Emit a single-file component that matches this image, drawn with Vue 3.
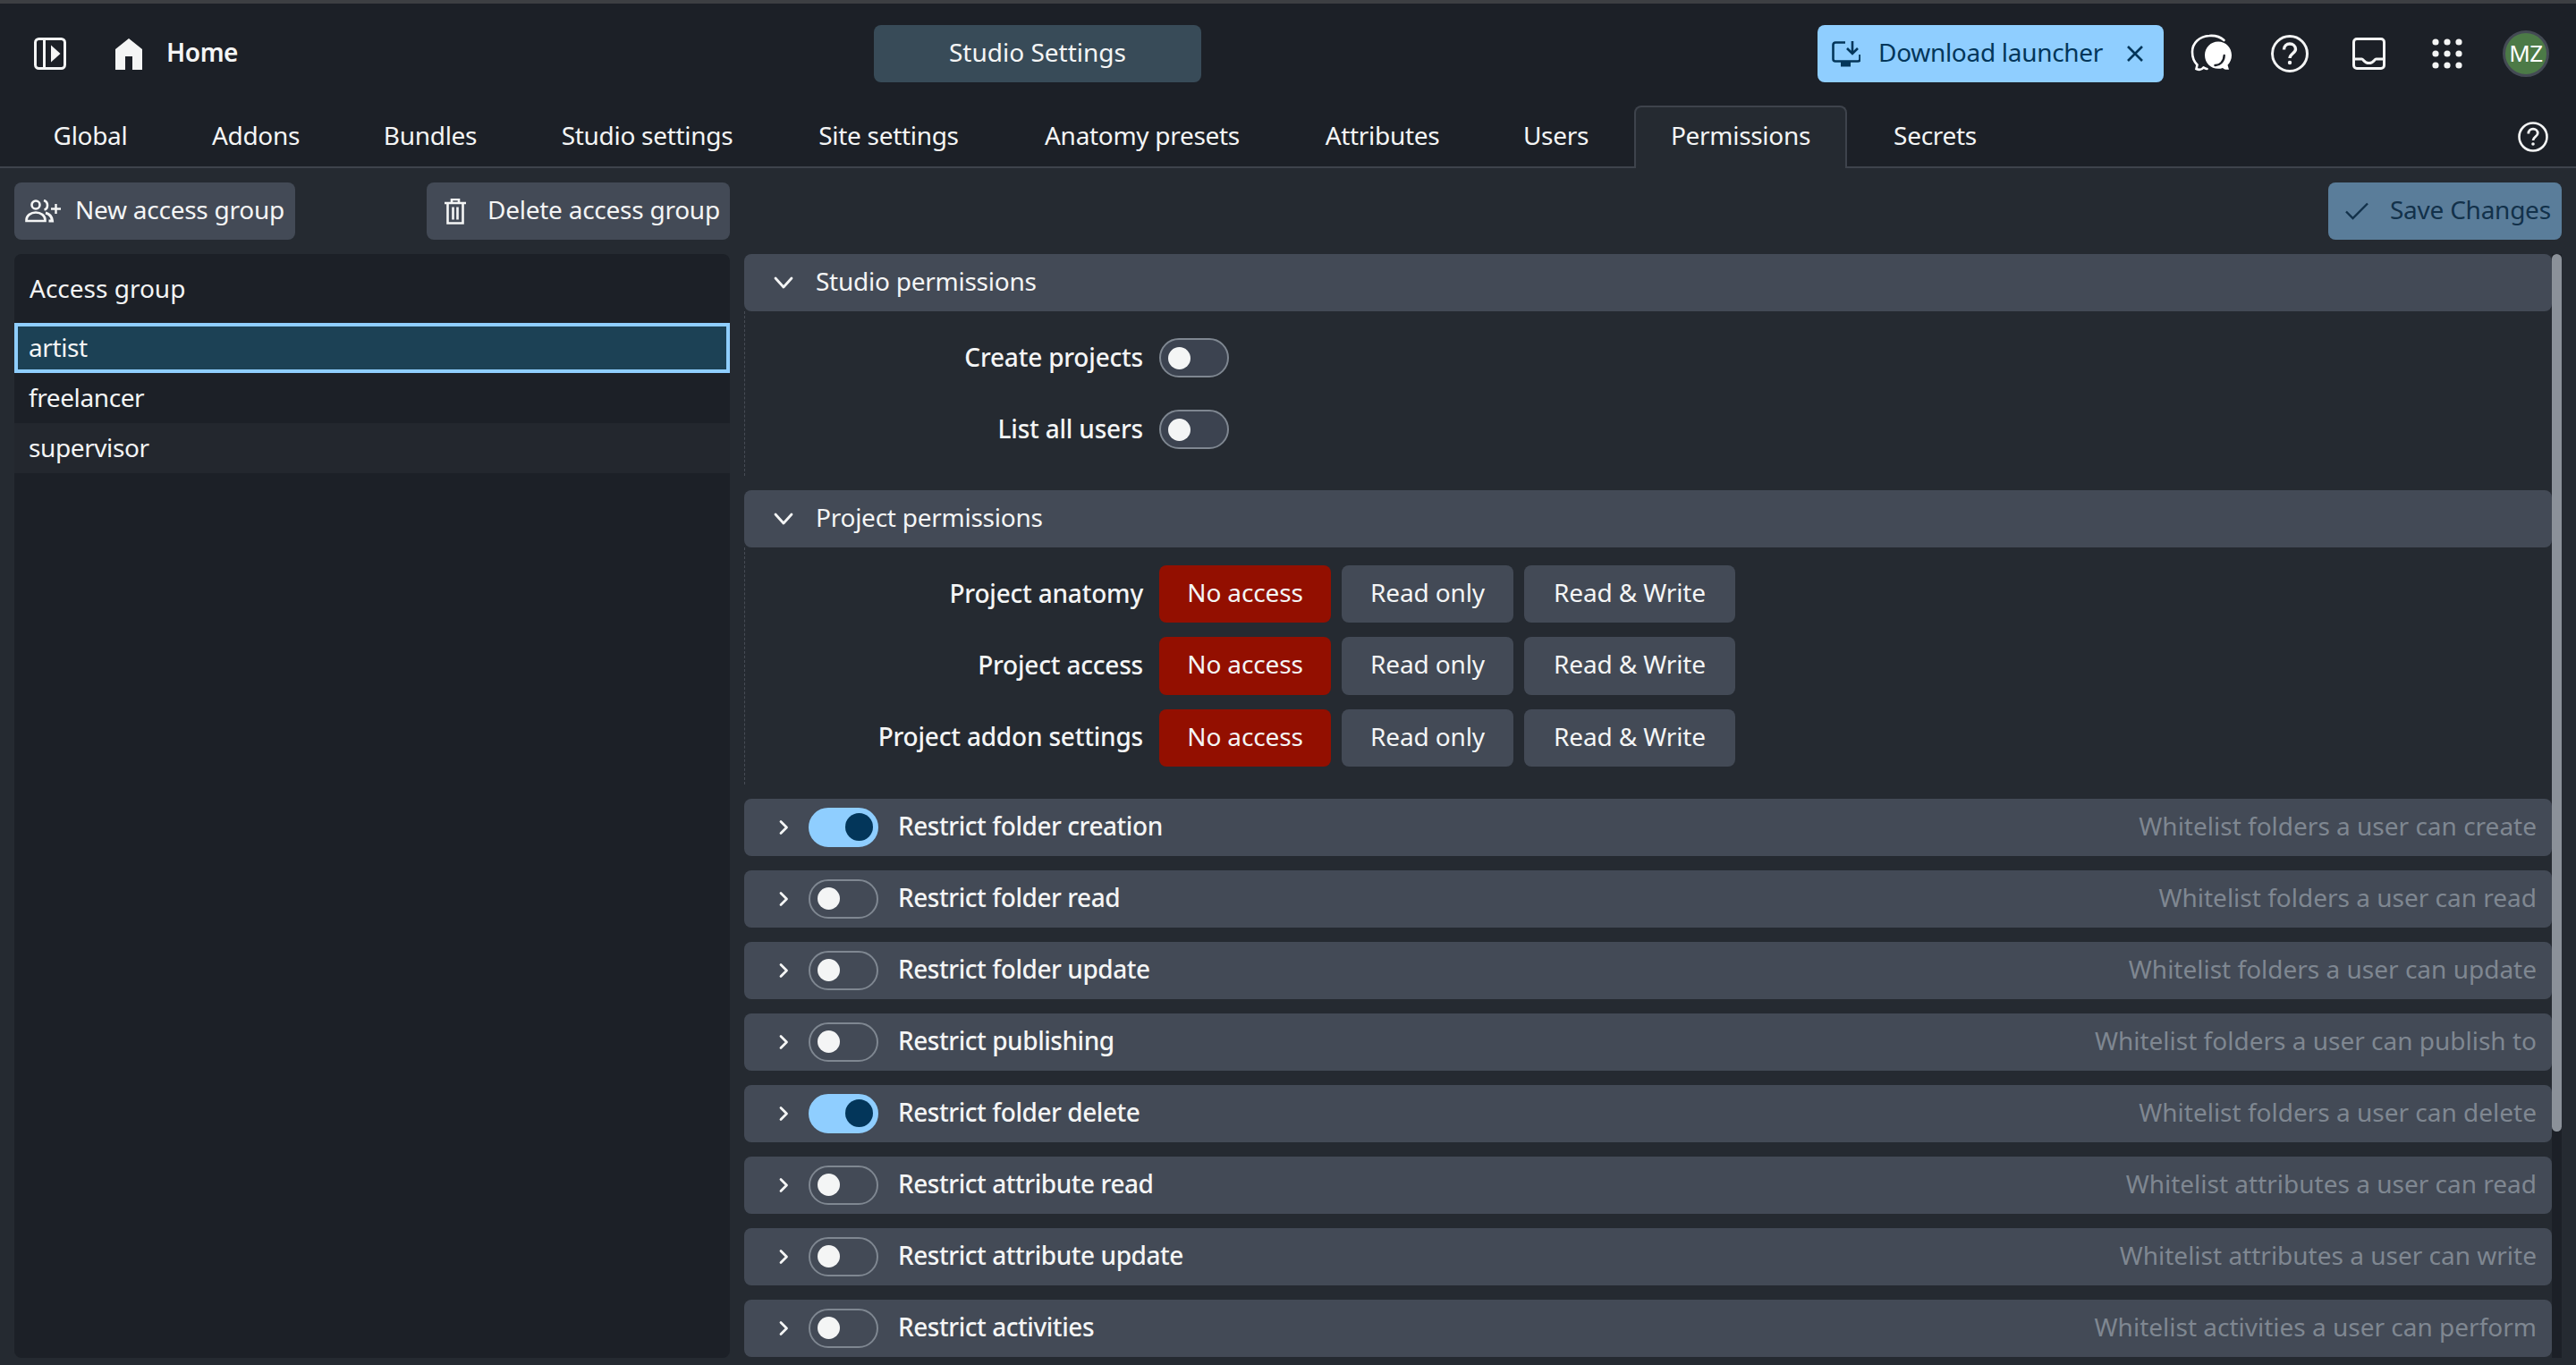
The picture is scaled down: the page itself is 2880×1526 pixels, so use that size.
<script setup>
const tabs = [
  { t: 'Global', w: 168 }, { t: 'Addons', w: 182 }, { t: 'Bundles', w: 188 },
  { t: 'Studio settings', w: 277 }, { t: 'Site settings', w: 243 }, { t: 'Anatomy presets', w: 304 },
  { t: 'Attributes', w: 213 }, { t: 'Users', w: 155 }, { t: 'Permissions', w: 238 }, { t: 'Secrets', w: 177 },
]
const groups = [{n:'artist',c:'sel'},{n:'freelancer',c:''},{n:'supervisor',c:'alt'}]
const studioPerms = ['Create projects','List all users']
const projectPerms = ['Project anatomy','Project access','Project addon settings']
const restrictions = [
  ['Restrict folder creation','Whitelist folders a user can create',true],
  ['Restrict folder read','Whitelist folders a user can read',false],
  ['Restrict folder update','Whitelist folders a user can update',false],
  ['Restrict publishing','Whitelist folders a user can publish to',false],
  ['Restrict folder delete','Whitelist folders a user can delete',true],
  ['Restrict attribute read','Whitelist attributes a user can read',false],
  ['Restrict attribute update','Whitelist attributes a user can write',false],
  ['Restrict activities','Whitelist activities a user can perform',false],
]
</script>

<template>
  <div class="app">
    <header class="top">
      <div class="left">
        <svg class="ic-side" width="36" height="36" viewBox="0 0 36 36"><rect x="1.5" y="1.5" width="33" height="33" rx="4" fill="none" stroke="#f4f5f5" stroke-width="3"/><path d="M11.5 2v32" stroke="#f4f5f5" stroke-width="3"/><path d="M19 8.500 29.500 18 19 27.500z" fill="#f4f5f5"/></svg>
        <svg class="ic-home" width="30" height="35" viewBox="0 0 30 35"><path d="M15 0 30 12v23H19V20h-8v15H0V12z" fill="#f4f5f5"/></svg>
        <span class="home">Home</span>
      </div>
      <div class="studio">Studio Settings</div>
      <div class="right">
        <div class="dl">
          <svg width="32" height="29" viewBox="0 0 32 29" fill="none" stroke="#03365a" stroke-width="2.600"><path d="M15 1.500H4A2.500 2.500 0 0 0 1.500 4v16A2.500 2.500 0 0 0 4 22.500h25a2.500 2.500 0 0 0 2.500-2.500v-5"/><path d="M23 0v13M17 8l6 6 6-6"/><path fill="#03365a" stroke="none" d="M10 23h11v5.500H10z"/></svg>
          <span class="dl-t">Download launcher</span>
          <svg width="22" height="22" viewBox="0 0 22 22" fill="none" stroke="#03365a" stroke-width="2.600"><path d="m3 3 16 16M19 3 3 19"/></svg>
        </div>
        <div class="slot">
          <svg width="48" height="48" viewBox="0 0 48 48" fill="none"><path d="M38.500 9C34 5 28 3.500 22 4 11 4.500 3 12 3 22c0 6 2 11 5.500 14.500L7.500 41c3 1.500 6 1 8-1.500 1.500.5 2 1.500 4 1.500" stroke="#fff" stroke-width="2.600" stroke-linecap="round"/><path d="M32 10.500c8.500 0 15 6.800 15 15.200 0 4.300-1.700 8.200-4.500 11l1.500 5c-3 .5-5.500-.3-7-1.800-1.600.6-3.300.9-5 .9-8.500 0-15-6.700-15-15.100S23.500 10.500 32 10.500z" fill="#fff"/><path d="M28.500 37c5 .3 10-4 10.200-11" stroke="#1c2027" stroke-width="2.400" stroke-linecap="round"/></svg>
        </div>
        <div class="slot">
          <svg width="42" height="42" viewBox="0 0 42 42" fill="none" stroke="#f4f5f5" stroke-width="3"><circle cx="21" cy="21" r="19.500"/><path d="M14.500 16.500c0-4 3-6.500 6.500-6.500s6.500 2.500 6.500 6c0 4.500-6.500 5-6.500 10" stroke-width="3.400"/><circle cx="21" cy="31" r="2.200" fill="#f4f5f5" stroke="none"/></svg>
        </div>
        <div class="slot">
          <svg width="37" height="36" viewBox="0 0 37 36" fill="none" stroke="#f4f5f5" stroke-width="3"><rect x="1.500" y="1.500" width="34" height="33" rx="3.500"/><path d="M2 24h8.500c2 0 2.500 4.500 8 4.500s6-4.500 8-4.500H35"/></svg>
        </div>
        <div class="slot">
          <svg width="34" height="34" viewBox="0 0 34 34" fill="#f4f5f5"><circle cx="4" cy="4" r="3.600"/><circle cx="17" cy="4" r="3.600"/><circle cx="30" cy="4" r="3.600"/><circle cx="4" cy="17" r="3.600"/><circle cx="17" cy="17" r="3.600"/><circle cx="30" cy="17" r="3.600"/><circle cx="4" cy="30" r="3.600"/><circle cx="17" cy="30" r="3.600"/><circle cx="30" cy="30" r="3.600"/></svg>
        </div>
        <div class="slot"><div class="avatar">MZ</div></div>
      </div>
    </header>

    <nav class="tabs">
      <div v-for="t in tabs" :key="t.t" class="tab" :class="{ active: t.t === 'Permissions' }" :style="{ width: t.w + 'px' }">{{ t.t }}</div>
      <svg class="tab-help" width="34" height="34" viewBox="0 0 34 34" fill="none" stroke="#f4f5f5" stroke-width="2.600"><circle cx="17" cy="17" r="15.500"/><path d="M11.800 13.400c0-3.200 2.400-5.200 5.200-5.200s5.200 2 5.200 4.800c0 3.600-5.200 4-5.200 8" stroke-width="2.800"/><circle cx="17" cy="25" r="1.800" fill="#f4f5f5" stroke="none"/></svg>
    </nav>

    <main class="main">
      <div class="toolbar">
        <div class="tb-left">
          <div class="btn b-new">
            <svg width="40" height="26" viewBox="0 0 40 26" fill="none" stroke="#f4f5f5" stroke-width="2.600"><circle cx="12" cy="6" r="4.500"/><path d="M21 1c3 1 4 3 4 5.500S23.500 11 21.500 11.500"/><path d="M1.500 24v-1c0-5 5-8.500 10.500-8.500S22.500 18 22.500 23v1z"/><path d="M23 15c4 1 7 4 7.500 9h-4" stroke-width="3"/><path d="M34.500 5v11M29 10.500h11" stroke-width="2.400"/></svg>
            <span>New access group</span>
          </div>
          <div class="btn b-del">
            <svg width="24" height="29" viewBox="0 0 24 29" fill="none" stroke="#f4f5f5" stroke-width="2.600"><path d="M0 5h24M8 4V1h8v3"/><path d="M3.500 5v22.500h17V5"/><path d="M9.500 9.500v14M14.500 9.500v14"/></svg>
            <span>Delete access group</span>
          </div>
        </div>
        <div class="btn b-save">
          <svg width="26" height="20" viewBox="0 0 26 20" fill="none" stroke="#12314a" stroke-width="2.400"><path d="M1 10.500 8.500 18 25 1.500"/></svg>
          <span>Save Changes</span>
        </div>
      </div>

      <div class="panels">
        <section class="list">
          <div class="list-h">Access group</div>
          <div v-for="g in groups" :key="g.n" class="list-r" :class="g.c">{{ g.n }}</div>
        </section>

        <section class="content">
          <div class="scroll">
            <div class="sec-h">
              <svg class="chev down" width="22" height="18" viewBox="0 0 22 18" fill="none" stroke="#f4f5f5" stroke-width="2.800" stroke-linecap="round" stroke-linejoin="round"><path d="m2 4 9 10 9-10"/></svg>
              <span class="s-t">Studio permissions</span>
            </div>
            <div class="sec-b">
              <div v-for="p in studioPerms" :key="p" class="form-r even">
                <div class="lbl">{{ p }}</div>
                <div class="sw small"><i></i></div>
              </div>
            </div>

            <div class="sec-h">
              <svg class="chev down" width="22" height="18" viewBox="0 0 22 18" fill="none" stroke="#f4f5f5" stroke-width="2.800" stroke-linecap="round" stroke-linejoin="round"><path d="m2 4 9 10 9-10"/></svg>
              <span class="s-t">Project permissions</span>
            </div>
            <div class="sec-b">
              <div v-for="p in projectPerms" :key="p" class="form-r">
                <div class="lbl">{{ p }}</div>
                <div class="opt o1 on">No access</div>
                <div class="opt o1">Read only</div>
                <div class="opt o2">Read &amp; Write</div>
              </div>
            </div>

            <div v-for="r in restrictions" :key="r[0]" class="sec-h row">
              <svg class="chev" width="18" height="18" viewBox="0 0 18 18" fill="none" stroke="#f4f5f5" stroke-width="2.800" stroke-linecap="round" stroke-linejoin="round"><path d="m6 2.500 6.500 6.500L6 15.500"/></svg>
              <div class="sw" :class="{ checked: r[2] }"><i></i></div>
              <span class="r-t">{{ r[0] }}</span>
              <span class="r-s">{{ r[1] }}</span>
            </div>
          </div>
          <div class="track"><div class="thumb"></div></div>
        </section>
      </div>
    </main>
  </div>
</template>

<style scoped>
.app {
  width: 2880px; height: 1526px; overflow: hidden; box-sizing: border-box;
  display: flex; flex-direction: column;
  background: #252a31; color: #f4f5f5;
  font-family: "Noto Sans", sans-serif; font-size: 28px;
  letter-spacing: -0.2px;
  border-top: 4px solid #3d3f43;
}
.top { height: 112px; flex: none; background: #1c2027; display: flex; align-items: center; box-sizing: border-box; }
.left { width: 977px; display: flex; align-items: center; padding-left: 38px; box-sizing: border-box; }
.ic-home { margin-left: 55px; }
.home { margin-left: 27px; font-weight: 600; padding-bottom: 4px; letter-spacing: -0.4px; }
.studio { width: 366px; height: 64px; box-sizing: border-box; padding-bottom: 4px; border-radius: 8px; background: #384b58; display: flex; align-items: center; justify-content: center; letter-spacing: 0; }
.right { margin-left: auto; display: flex; align-items: center; padding-right: 12px; }
.dl { width: 387px; height: 64px; margin-right: 9px; box-sizing: border-box; padding-left: 16px; border-radius: 8px; background: #8fceff; color: #03365a; display: flex; align-items: center; }
.dl-t { margin-left: 20px; width: 276px; letter-spacing: -0.3px; padding-bottom: 4px; }
.slot { width: 88px; height: 64px; display: flex; align-items: center; justify-content: center; }
.avatar { width: 52px; height: 52px; box-sizing: border-box; border-radius: 50%; background: #4c7a47; border: 3px solid #444a54; display: flex; align-items: center; justify-content: center; font-size: 26px; letter-spacing: -0.5px; color: #fff; padding-bottom: 2px; }

.tabs { height: 72px; flex: none; background: #1c2027; border-bottom: 2px solid #3e434c; display: flex; align-items: flex-end; gap: 10px; padding-left: 17px; box-sizing: border-box; position: relative; }
.tab { height: 68px; display: flex; align-items: center; justify-content: center; box-sizing: border-box; padding-bottom: 8px; border: 2px solid transparent; border-bottom: none; border-radius: 8px 8px 0 0; margin-bottom: -2px; letter-spacing: -0.3px; flex: none; }
.tab.active { background: #252a31; border-color: #3e434c; height: 70px; padding-bottom: 6px; }
.tab-help { position: absolute; right: 31px; top: 20px; }

.main { flex: 1; min-height: 0; padding: 16px 16px 8px; display: flex; flex-direction: column; gap: 16px; }
.toolbar { display: flex; justify-content: space-between; height: 64px; flex: none; }
.tb-left { width: 800px; display: flex; justify-content: space-between; }
.btn { height: 64px; border-radius: 8px; background: #434a56; display: flex; align-items: center; box-sizing: border-box; }
.btn span { padding-bottom: 4px; letter-spacing: -0.25px; }
.b-new { width: 314px; padding-left: 12px; gap: 16px; }
.b-del { width: 339px; padding-left: 20px; gap: 24px; }
.b-save { width: 261px; padding-left: 19px; gap: 24px; background: #5a7d9a; color: #12314a; }

.panels { flex: 1; min-height: 0; display: flex; gap: 16px; }
.list { width: 800px; flex: none; background: #1c2027; border-radius: 8px; }
.list-h { height: 77px; box-sizing: border-box; padding: 0 17px 2px; display: flex; align-items: center; letter-spacing: 0; }
.list-r { height: 56px; padding: 0 16px 2px; display: flex; align-items: center; box-sizing: border-box; letter-spacing: -0.4px; }
.list-r.sel { background: #1c4155; border: 4px solid #8fceff; padding: 0 12px 2px; }
.list-r.alt { background: #23272e; }

.content { flex: 1; min-width: 0; display: flex; }
.scroll { flex: 1; min-width: 0; display: flex; flex-direction: column; }
.track { width: 11px; flex: none; background: #1c2027; }
.thumb { height: 981px; border-radius: 6px; background: #8b9199; }

.sec-h { height: 64px; flex: none; background: #434a56; border-radius: 8px; display: flex; align-items: center; padding-left: 35px; padding-right: 17px; }
.chev { flex: none; }
.chev.down { margin: 0 -2px; }
.s-t { margin-left: 27px; letter-spacing: -0.25px; padding-bottom: 4px; }
.sec-b { margin: 0 0 16px; padding: 20px 0; border-left: 1px dashed #474c55; display: flex; flex-direction: column; gap: 16px; }
.form-r { height: 64.33px; display: flex; align-items: center; gap: 12px; }
.form-r.even { height: 64px; }
.lbl { width: 445px; margin-right: 6px; text-align: right; white-space: nowrap; flex: none; font-weight: 500; letter-spacing: -0.2px; padding-bottom: 3px; }
.opt { height: 100%; box-sizing: border-box; padding-bottom: 4px; border-radius: 8px; background: #434a56; display: flex; align-items: center; justify-content: center; letter-spacing: -0.15px; }
.o1 { width: 192px; }
.o2 { width: 236px; }
.opt.on { background: #930f00; }

.row { margin-bottom: 16px; }
.row .chev { margin-right: 19px; }
.row:last-child { margin-bottom: 0; }
.r-t { margin-left: 22px; font-weight: 500; letter-spacing: -0.45px; padding-bottom: 3px; }
.r-s { margin-left: auto; color: #7f8791; letter-spacing: 0; padding-bottom: 4px; }

.sw { width: 78px; height: 44px; box-sizing: border-box; border-radius: 22px; border: 2px solid #7f8791; background: #434a56; display: flex; align-items: center; padding-left: 8px; flex: none; }
.sw i { width: 25px; height: 25px; border-radius: 50%; background: #f4f5f5; display: block; }
.sw.checked { background: #8fceff; border-color: #8fceff; padding-left: 39px; }
.sw.checked i { width: 31px; height: 31px; background: #03365a; }
.sw.small { background: #3c4350; }
</style>
